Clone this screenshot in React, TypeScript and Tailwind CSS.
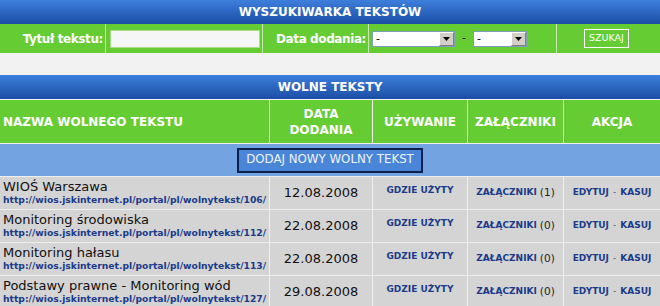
import React from "react";

const rows = [
  { title: "WIOŚ Warszawa", id: "106", date: "12.08.2008", att: 1 },
  { title: "Monitoring środowiska", id: "112", date: "22.08.2008", att: 0 },
  { title: "Monitoring hałasu", id: "113", date: "22.08.2008", att: 0 },
  { title: "Podstawy prawne - Monitoring wód", id: "127", date: "29.08.2008", att: 0 },
];

function Select({ width }: { width: string }) {
  return (
    <div className={`flex h-[16px] items-stretch border border-[#7f9db9] bg-white ${width}`}>
      <span className="flex-1 pl-[3px] text-[11px] leading-[14px] text-black">-</span>
      <span className="flex w-[15px] items-center justify-center border border-t-white border-l-white border-r-[#808080] border-b-[#808080] bg-[#d4d0c8]">
        <svg width="7" height="4" viewBox="0 0 7 4">
          <path d="M0 0h7L3.5 4z" fill="#000" />
        </svg>
      </span>
    </div>
  );
}

export default function App() {
  return (
    <div className="w-[660px] bg-white font-['DejaVu_Sans',sans-serif]">
      {/* wyszukiwarka */}
      <div className="flex h-6 items-center justify-center bg-gradient-to-b from-[#3e7fdc] to-[#1b4ea5] text-[12px] font-bold text-white">
        WYSZUKIWARKA TEKSTÓW
      </div>
      <div className="flex h-[29px] bg-[#66cc33] text-[12px] font-bold text-white">
        <div className="flex w-[105px] items-center justify-end pr-[2px] tracking-[-0.4px]">Tytuł tekstu:</div>
        <div className="flex w-[157px] items-center border-l border-[#c6ebb0] pl-[4px]">
          <div className="h-[18px] w-[150px] border border-[#a8dd88] bg-[#f6f6f6]" />
        </div>
        <div className="flex w-[106px] items-center justify-end border-l border-[#c6ebb0] pr-[2px] tracking-[-0.4px]">
          Data dodania:
        </div>
        <div className="flex w-[188px] items-center gap-[7px] border-l border-[#c6ebb0] pl-[3px] font-normal">
          <Select width="w-[83px]" />
          <span className="text-[11px] text-black">-</span>
          <Select width="w-[54px]" />
        </div>
        <div className="flex flex-1 items-center justify-center border-l border-[#c6ebb0] pr-[4px]">
          <div className="flex h-[19px] w-[45px] items-center justify-center border border-white text-[9.5px] font-normal text-white">
            SZUKAJ
          </div>
        </div>
      </div>
      <div className="h-[22px] bg-[#f2f2f2]" />

      {/* wolne teksty */}
      <div className="flex h-6 items-center justify-center bg-gradient-to-b from-[#3e7fdc] to-[#1b4ea5] text-[12px] font-bold text-white">
        WOLNE TEKSTY
      </div>
      <div className="grid grid-cols-[269px_102px_94px_95px_1fr] gap-px border-t border-[#eef2f8] bg-[#eef0ee]">
        <div className="flex h-[43px] items-center bg-[#66cc33] pl-[3px] text-[12px] font-bold text-white">
          NAZWA WOLNEGO TEKSTU
        </div>
        <div className="flex flex-col items-center justify-center bg-[#66cc33] text-[12px] font-bold leading-[16px] text-white">
          <span>DATA</span>
          <span>DODANIA</span>
        </div>
        <div className="flex items-center justify-center bg-[#66cc33] text-[12px] font-bold text-white">UŻYWANIE</div>
        <div className="flex items-center justify-center bg-[#66cc33] text-[12px] font-bold text-white">ZAŁĄCZNIKI</div>
        <div className="flex items-center justify-center bg-[#66cc33] text-[12px] font-bold text-white">AKCJA</div>

        <div className="col-span-5 flex h-[32px] items-center justify-center bg-[#73a4e1]">
          <div className="flex h-[25px] w-[186px] items-center justify-center border-2 border-[#0d1f4d] bg-[#4a86d7] text-[11.8px] text-[#eef3fb]">
            DODAJ NOWY WOLNY TEKST
          </div>
        </div>

        {rows.map((r) => (
          <React.Fragment key={r.id}>
            <div className="flex h-[32px] flex-col justify-center bg-[#d4d4d4] pl-[3px]">
              <span className="text-[13px] leading-[14px] text-[#111]">{r.title}</span>
              <span className="text-[9.2px] font-bold leading-[12px] text-[#1b3b8a]">
                http://wios.jskinternet.pl/portal/pl/wolnytekst/{r.id}/
              </span>
            </div>
            <div className="flex items-center justify-center bg-[#d4d4d4] text-[13px] text-[#111]">{r.date}</div>
            <div className="flex items-center justify-center bg-[#d4d4d4] pb-[4px] text-[9px] font-bold text-[#1b3b8a]">
              GDZIE UŻYTY
            </div>
            <div className="flex items-center justify-center bg-[#d4d4d4] text-[9px] font-bold text-[#1b3b8a]">
              ZAŁĄCZNIKI<span className="ml-[3px] text-[10.5px] font-normal text-[#222]">({r.att})</span>
            </div>
            <div className="flex items-center justify-center bg-[#d4d4d4] text-[9px] font-bold text-[#1b3b8a]">
              EDYTUJ<span className="mx-[4px] font-normal text-[#555]">-</span>KASUJ
            </div>
          </React.Fragment>
        ))}
      </div>
    </div>
  );
}
